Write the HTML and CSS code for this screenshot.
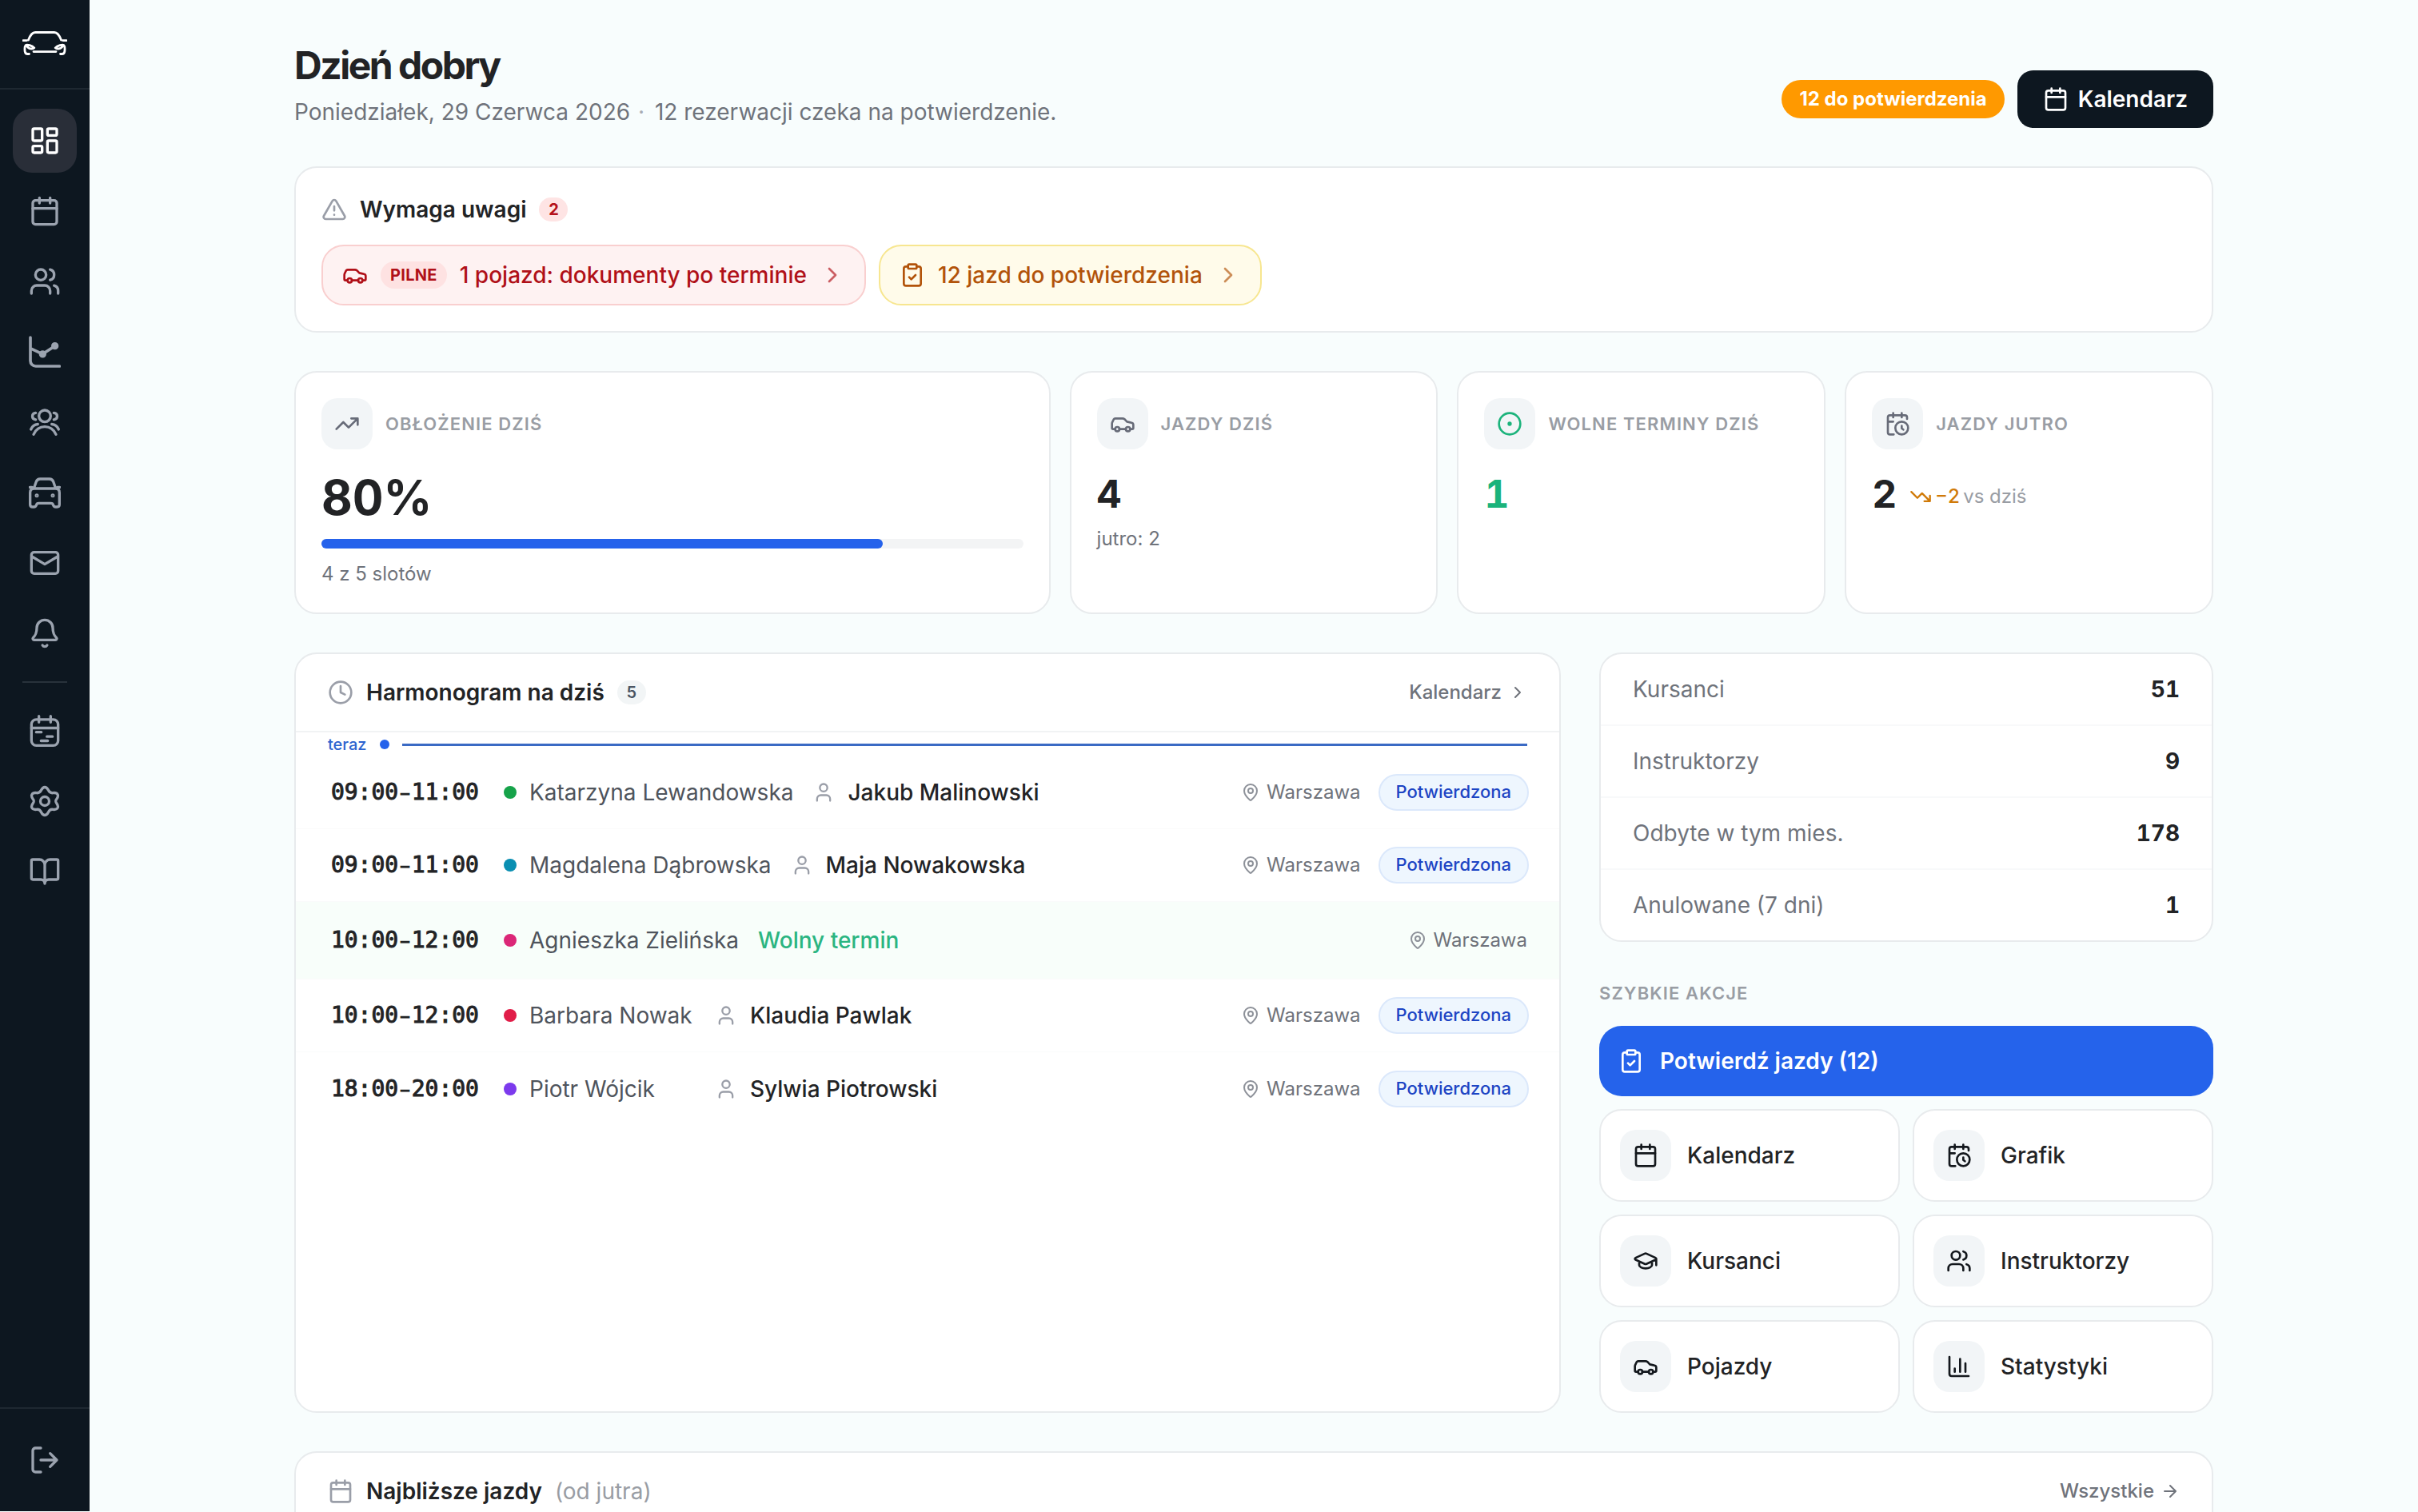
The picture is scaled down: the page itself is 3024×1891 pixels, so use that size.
FILE: index.html
```html
<!DOCTYPE html>
<html lang="pl">
<head>
  <meta charset="UTF-8">
  <meta name="viewport" content="width=device-width, initial-scale=1.0">
  <title>Panel</title>
  <link rel="stylesheet" href="styles.css">
</head>
<body>
  <!-- Ikony -->
  <svg class="sprite" xmlns="http://www.w3.org/2000/svg">
    <symbol id="logo" viewBox="0 0 56 32">
      <path d="M7.5 11C10 4.5 12.5 1.5 16 1.5h24c3.500 0 6 3 8.500 9.500M1 11.600h4.500M50.500 11.600H55M14 25.600h28M8.500 28.500H6.500c-2 0-3-1-3.300-3-.4-3-.5-6.500 1-8 1.500-1.200 8 .3 10.600 3.300-2 2-7.500 1.500-9-2M47.500 28.500h2c2 0 3-1 3.300-3 .4-3 .5-6.500-1-8-1.500-1.200-8 .3-10.600 3.300 2 2 7.500 1.500 9-2"/>
    </symbol>
    <symbol id="dashboard" viewBox="0 0 24 24">
      <rect x="3" y="3" width="7" height="9" rx="1"/><rect x="14" y="3" width="7" height="5" rx="1"/><rect x="14" y="12" width="7" height="9" rx="1"/><rect x="3" y="16" width="7" height="5" rx="1"/>
    </symbol>
    <symbol id="calendar" viewBox="0 0 24 24">
      <path d="M8 2v4M16 2v4M3 10h18"/><rect x="3" y="4" width="18" height="18" rx="2"/>
    </symbol>
    <symbol id="users" viewBox="0 0 24 24">
      <path d="M16 21v-2a4 4 0 0 0-4-4H6a4 4 0 0 0-4 4v2M22 21v-2a4 4 0 0 0-3-3.870M16 3.130a4 4 0 0 1 0 7.750"/><circle cx="9" cy="7" r="4"/>
    </symbol>
    <symbol id="line-chart" viewBox="0 0 24 24">
      <path d="M1.200 1.200v17.600a4 4 0 0 0 4 4H23M1.500 9.500l8.900 4.200 9.200-6.100" stroke-width="2.200"/><circle cx="10.400" cy="13.700" r="1.800" fill="currentColor"/><circle cx="19.600" cy="7.600" r="1.800" fill="currentColor"/>
    </symbol>
    <symbol id="group" viewBox="0 0 24 24">
      <circle cx="12" cy="7.400" r="4.400"/><path d="M3.600 21.200c1.700-3.800 4.700-5.800 8.400-5.800s6.700 2 8.400 5.800M5.200 5c-1.600.1-2.500 1.200-2.500 2.500s.9 2.400 2.500 2.600M18.800 5c1.600.1 2.500 1.200 2.500 2.500s-.9 2.400-2.500 2.600M1.600 17.400c1-2.400 2.700-3.700 5.200-3.900M22.400 17.400c-1-2.400-2.700-3.700-5.200-3.900"/>
    </symbol>
    <symbol id="car-front" viewBox="0 0 24 24">
      <path d="M3.800 9l1.700-5c.5-1.500 1.400-2.200 3-2.200h7c1.600 0 2.500.7 3 2.200l1.700 5M.8 8h1.700M21.500 8h1.700M4 9h16c2 0 3 1.200 3 3v9c0 1.200-.6 1.800-1.800 1.800h-1c-1 0-1.600-.5-1.900-1.500-.2-.9-.8-1.300-1.800-1.300h-9c-1 0-1.600.4-1.800 1.300-.3 1-.9 1.500-1.900 1.500h-1C1.600 22.800 1 22.200 1 21v-9c0-1.800 1-3 3-3z"/><circle cx="6" cy="14.300" r=".5" fill="currentColor"/><circle cx="18" cy="14.300" r=".5" fill="currentColor"/>
    </symbol>
    <symbol id="mail" viewBox="0 0 24 24">
      <rect x="2" y="4" width="20" height="16" rx="2"/><path d="M2.300 7.200l9.700 5.800 9.700-5.800"/>
    </symbol>
    <symbol id="bell" viewBox="0 0 24 24">
      <path d="M10.268 21a2 2 0 0 0 3.464 0M3.262 15.326A1 1 0 0 0 4 17h16a1 1 0 0 0 .74-1.673C19.410 13.956 18 12.499 18 8A6 6 0 0 0 6 8c0 4.499-1.411 5.956-2.738 7.326"/>
    </symbol>
    <symbol id="schedule" viewBox="0 0 24 24">
      <rect x="2" y="3.500" width="20" height="19.500" rx="3.600"/><path d="M2 9.900h20M7.600 1v4.600M16.400 1v4.600M5.600 13h3.800M13.600 16.300h4.200M9.200 19.500h5"/>
    </symbol>
    <symbol id="settings" viewBox="0 0 24 24">
      <path d="M12 1.500c1.500 0 2.100 1.100 2.700 2.300.8 1.600 1.700 2.200 3.400 2 1.400-.2 2.700-.2 3.500 1.100.7 1.300.1 2.400-.7 3.500-1 1.300-1 1.900 0 3.200.8 1.100 1.400 2.200.7 3.500-.8 1.300-2.100 1.300-3.500 1.100-1.700-.2-2.600.4-3.400 2-.6 1.200-1.200 2.300-2.700 2.300s-2.100-1.100-2.700-2.300c-.8-1.600-1.700-2.200-3.400-2-1.400.2-2.700.2-3.500-1.100-.7-1.300-.1-2.400.7-3.500 1-1.300 1-1.900 0-3.200-.8-1.100-1.400-2.200-.7-3.500.8-1.300 2.100-1.300 3.500-1.100 1.700.2 2.600-.4 3.400-2 .6-1.200 1.200-2.300 2.700-2.300z"/><circle cx="12" cy="12" r="3.300"/>
    </symbol>
    <symbol id="book" viewBox="0 0 24 24">
      <path d="M12 7v14M3 18a1 1 0 0 1-1-1V4a1 1 0 0 1 1-1h5a4 4 0 0 1 4 4 4 4 0 0 1 4-4h5a1 1 0 0 1 1 1v13a1 1 0 0 1-1 1h-6a3 3 0 0 0-3 3 3 3 0 0 0-3-3z"/>
    </symbol>
    <symbol id="logout" viewBox="0 0 24 24">
      <path d="M9 21H5a2 2 0 0 1-2-2V5a2 2 0 0 1 2-2h4M16 17l5-5-5-5M21 12H9"/>
    </symbol>
    <symbol id="alert" viewBox="0 0 24 24">
      <path d="M21.730 18l-8-14a2 2 0 0 0-3.480 0l-8 14A2 2 0 0 0 4 21h16a2 2 0 0 0 1.730-3M12 9v4M12 17h.01"/>
    </symbol>
    <symbol id="car" viewBox="0 0 24 24">
      <path d="M19 17h2c.6 0 1-.4 1-1v-3c0-.9-.7-1.700-1.500-1.900C18.700 10.600 16 10 16 10s-1.300-1.400-2.200-2.300c-.5-.4-1.100-.7-1.800-.7H5c-.6 0-1.100.4-1.400.9l-1.400 2.900A3.700 3.700 0 0 0 2 12v4c0 .6.4 1 1 1h2M9 17h6"/><circle cx="7" cy="17" r="2"/><circle cx="17" cy="17" r="2"/>
    </symbol>
    <symbol id="clipboard" viewBox="0 0 24 24">
      <rect x="8" y="2" width="8" height="4" rx="1"/><path d="M16 4h2a2 2 0 0 1 2 2v14a2 2 0 0 1-2 2H6a2 2 0 0 1-2-2V6a2 2 0 0 1 2-2h2M9 14l2 2 4-4"/>
    </symbol>
    <symbol id="chevron" viewBox="0 0 24 24"><path d="M9 18l6-6-6-6"/></symbol>
    <symbol id="trend-up" viewBox="0 0 24 24"><path d="M22 7l-8.500 8.500-5-5L2 17M16 7h6v6"/></symbol>
    <symbol id="trend-down" viewBox="0 0 24 24"><path d="M22 17l-8.500-8.500-5 5L2 7M16 17h6v-6"/></symbol>
    <symbol id="target" viewBox="0 0 24 24"><circle cx="12" cy="12" r="10"/><circle cx="12" cy="12" r="1"/></symbol>
    <symbol id="calendar-clock" viewBox="0 0 24 24">
      <path d="M21 7.500V6a2 2 0 0 0-2-2H5a2 2 0 0 0-2 2v14a2 2 0 0 0 2 2h3.500M16 2v4M8 2v4M3 10h5M17.500 17.500L16 16.300V14"/><circle cx="16" cy="16" r="6"/>
    </symbol>
    <symbol id="clock" viewBox="0 0 24 24"><circle cx="12" cy="12" r="10"/><path d="M12 6v6l4 2"/></symbol>
    <symbol id="user" viewBox="0 0 24 24"><path d="M19 21v-2a4 4 0 0 0-4-4H9a4 4 0 0 0-4 4v2"/><circle cx="12" cy="7" r="4"/></symbol>
    <symbol id="pin" viewBox="0 0 24 24">
      <path d="M20 10c0 4.993-5.539 10.193-7.399 11.799a1 1 0 0 1-1.202 0C9.539 20.193 4 14.993 4 10a8 8 0 0 1 16 0"/><circle cx="12" cy="10" r="3"/>
    </symbol>
    <symbol id="cap" viewBox="0 0 24 24">
      <path d="M21.420 10.922a1 1 0 0 0-.019-1.838L12.830 5.180a2 2 0 0 0-1.660 0L2.600 9.080a1 1 0 0 0 0 1.832l8.570 3.908a2 2 0 0 0 1.660 0zM22 10v6M6 12.500V16a6 3 0 0 0 12 0v-3.500"/>
    </symbol>
    <symbol id="bars" viewBox="0 0 24 24"><path d="M3 3v16a2 2 0 0 0 2 2h16M18 17V9M13 17V5M8 17v-3"/></symbol>
    <symbol id="arrow" viewBox="0 0 24 24"><path d="M5 12h14M12 5l7 7-7 7"/></symbol>
  </svg>

  <div class="layout">
    <aside class="sidebar">
      <div class="brand"><svg class="icon"><use href="#logo"/></svg></div>
      <nav class="menu">
        <a class="menu-item active"><svg class="icon"><use href="#dashboard"/></svg></a>
        <a class="menu-item"><svg class="icon"><use href="#calendar"/></svg></a>
        <a class="menu-item"><svg class="icon"><use href="#users"/></svg></a>
        <a class="menu-item"><svg class="icon"><use href="#line-chart"/></svg></a>
        <a class="menu-item"><svg class="icon"><use href="#group"/></svg></a>
        <a class="menu-item"><svg class="icon"><use href="#car-front"/></svg></a>
        <a class="menu-item"><svg class="icon"><use href="#mail"/></svg></a>
        <a class="menu-item"><svg class="icon"><use href="#bell"/></svg></a>
        <span class="menu-line"></span>
        <a class="menu-item"><svg class="icon"><use href="#schedule"/></svg></a>
        <a class="menu-item"><svg class="icon"><use href="#settings"/></svg></a>
        <a class="menu-item"><svg class="icon"><use href="#book"/></svg></a>
      </nav>
      <div class="logout"><a class="menu-item"><svg class="icon"><use href="#logout"/></svg></a></div>
    </aside>

    <main class="content">
      <header class="top">
        <div>
          <h1>Dzień dobry</h1>
          <p class="date">Poniedziałek, 29 Czerwca 2026 <span class="sep">·</span> 12 rezerwacji czeka na potwierdzenie.</p>
        </div>
        <div class="top-actions">
          <span class="pending">12 do potwierdzenia</span>
          <a class="btn-dark"><svg class="icon"><use href="#calendar"/></svg>Kalendarz</a>
        </div>
      </header>

      <section class="card attention">
        <h2><svg class="icon muted"><use href="#alert"/></svg>Wymaga uwagi<span class="count red">2</span></h2>
        <div class="alerts">
          <a class="alert alert-red"><svg class="icon"><use href="#car"/></svg><span class="urgent">PILNE</span><span class="alert-text">1 pojazd: dokumenty po terminie</span><svg class="icon faded"><use href="#chevron"/></svg></a>
          <a class="alert alert-yellow"><svg class="icon"><use href="#clipboard"/></svg><span class="alert-text">12 jazd do potwierdzenia</span><svg class="icon faded"><use href="#chevron"/></svg></a>
        </div>
      </section>

      <section class="stats">
        <div class="card stat wide">
          <div class="stat-head"><span class="tile-icon"><svg class="icon"><use href="#trend-up"/></svg></span>OBŁOŻENIE DZIŚ</div>
          <div class="stat-value">80%</div>
          <div class="progress"><div class="progress-bar" style="width: 80%"></div></div>
          <p class="stat-note">4 z 5 slotów</p>
        </div>
        <div class="card stat">
          <div class="stat-head"><span class="tile-icon"><svg class="icon"><use href="#car"/></svg></span>JAZDY DZIŚ</div>
          <div class="stat-value">4</div>
          <p class="stat-note">jutro: 2</p>
        </div>
        <div class="card stat">
          <div class="stat-head"><span class="tile-icon green"><svg class="icon"><use href="#target"/></svg></span>WOLNE TERMINY DZIŚ</div>
          <div class="stat-value green">1</div>
        </div>
        <div class="card stat">
          <div class="stat-head"><span class="tile-icon"><svg class="icon"><use href="#calendar-clock"/></svg></span>JAZDY JUTRO</div>
          <div class="stat-value">2<span class="trend"><svg class="icon"><use href="#trend-down"/></svg><b>−2</b><span>vs dziś</span></span></div>
        </div>
      </section>

      <section class="columns">
        <div class="card schedule">
          <div class="card-head">
            <h2><svg class="icon muted"><use href="#clock"/></svg>Harmonogram na dziś<span class="count">5</span></h2>
            <a class="link">Kalendarz<svg class="icon"><use href="#chevron"/></svg></a>
          </div>
          <div class="now"><span>teraz</span><i class="now-dot"></i><i class="now-line"></i></div>
          <div class="lesson">
            <span class="time">09:00<span class="dash">–</span>11:00</span>
            <span class="teacher"><i class="dot dot-green"></i>Katarzyna Lewandowska</span>
            <span class="student"><svg class="icon"><use href="#user"/></svg>Jakub Malinowski</span>
            <span class="place"><svg class="icon"><use href="#pin"/></svg>Warszawa</span>
            <span class="status">Potwierdzona</span>
          </div>
          <div class="lesson">
            <span class="time">09:00<span class="dash">–</span>11:00</span>
            <span class="teacher"><i class="dot dot-cyan"></i>Magdalena Dąbrowska</span>
            <span class="student"><svg class="icon"><use href="#user"/></svg>Maja Nowakowska</span>
            <span class="place"><svg class="icon"><use href="#pin"/></svg>Warszawa</span>
            <span class="status">Potwierdzona</span>
          </div>
          <div class="lesson free">
            <span class="time">10:00<span class="dash">–</span>12:00</span>
            <span class="teacher"><i class="dot dot-pink"></i>Agnieszka Zielińska</span>
            <span class="free-label">Wolny termin</span>
            <span class="place"><svg class="icon"><use href="#pin"/></svg>Warszawa</span>
          </div>
          <div class="lesson">
            <span class="time">10:00<span class="dash">–</span>12:00</span>
            <span class="teacher"><i class="dot dot-red"></i>Barbara Nowak</span>
            <span class="student"><svg class="icon"><use href="#user"/></svg>Klaudia Pawlak</span>
            <span class="place"><svg class="icon"><use href="#pin"/></svg>Warszawa</span>
            <span class="status">Potwierdzona</span>
          </div>
          <div class="lesson">
            <span class="time">18:00<span class="dash">–</span>20:00</span>
            <span class="teacher"><i class="dot dot-violet"></i>Piotr Wójcik</span>
            <span class="student"><svg class="icon"><use href="#user"/></svg>Sylwia Piotrowski</span>
            <span class="place"><svg class="icon"><use href="#pin"/></svg>Warszawa</span>
            <span class="status">Potwierdzona</span>
          </div>
        </div>

        <div class="side">
          <div class="card totals">
            <div class="total"><span>Kursanci</span><b>51</b></div>
            <div class="total"><span>Instruktorzy</span><b>9</b></div>
            <div class="total"><span>Odbyte w tym mies.</span><b>178</b></div>
            <div class="total"><span>Anulowane (7 dni)</span><b>1</b></div>
          </div>
          <h3>SZYBKIE AKCJE</h3>
          <a class="btn-blue"><svg class="icon"><use href="#clipboard"/></svg>Potwierdź jazdy (12)</a>
          <div class="shortcuts">
            <a class="card shortcut"><span class="tile-icon"><svg class="icon"><use href="#calendar"/></svg></span>Kalendarz</a>
            <a class="card shortcut"><span class="tile-icon"><svg class="icon"><use href="#calendar-clock"/></svg></span>Grafik</a>
            <a class="card shortcut"><span class="tile-icon"><svg class="icon"><use href="#cap"/></svg></span>Kursanci</a>
            <a class="card shortcut"><span class="tile-icon"><svg class="icon"><use href="#users"/></svg></span>Instruktorzy</a>
            <a class="card shortcut"><span class="tile-icon"><svg class="icon"><use href="#car"/></svg></span>Pojazdy</a>
            <a class="card shortcut"><span class="tile-icon"><svg class="icon"><use href="#bars"/></svg></span>Statystyki</a>
          </div>
        </div>
      </section>

      <section class="card upcoming">
        <div class="card-head">
          <h2><svg class="icon muted"><use href="#calendar"/></svg>Najbliższe jazdy<span class="hint">(od jutra)</span></h2>
          <a class="link">Wszystkie<svg class="icon"><use href="#arrow"/></svg></a>
        </div>
      </section>
    </main>
  </div>
</body>
</html>
```
FILE: styles.css
```css
* {
  box-sizing: border-box;
}
body {
  margin: 0;
  height: 1891px;
  overflow: hidden;
  font-family: Inter, "Liberation Sans", sans-serif;
  font-size: 28px;
  line-height: 40px;
  color: #222325;
  background-color: #f8fdfd;
}
h1, h2, h3, p {
  margin: 0;
}
.sprite {
  display: none;
}
.icon {
  width: 32px;
  height: 32px;
  flex-shrink: 0;
  fill: none;
  stroke: currentColor;
  stroke-width: 2;
  stroke-linecap: round;
  stroke-linejoin: round;
}
.muted {
  color: #9a9ea8;
}
.layout {
  display: flex;
}

/* menu boczne */
.sidebar {
  width: 112px;
  height: 1890px;
  display: flex;
  flex-direction: column;
  background-color: #0d1720;
  color: #9ba3af;
}
.brand {
  height: 112px;
  display: flex;
  align-items: center;
  justify-content: center;
  border-bottom: 2px solid #1e2831;
  color: #fff;
}
.brand .icon {
  width: 56px;
  height: 32px;
  stroke-width: 2.8;
}
.menu {
  flex: 1;
  display: flex;
  flex-direction: column;
  align-items: center;
  gap: 8px;
  padding-top: 24px;
}
.menu-item {
  width: 80px;
  height: 80px;
  display: flex;
  align-items: center;
  justify-content: center;
  border-radius: 24px;
}
.menu-item .icon {
  width: 40px;
  height: 40px;
}
.menu-item.active {
  background-color: #292e38;
  color: #fff;
}
.menu-line {
  width: 56px;
  height: 2px;
  margin: 12px 0;
  background-color: #28323b;
}
.logout {
  height: 130px;
  display: flex;
  align-items: center;
  justify-content: center;
  border-top: 2px solid #1e2831;
}

.content {
  width: 2400px;
  height: 1891px;
  margin: 0 auto;
  padding-top: 52px;
  overflow: hidden;
}
.top {
  height: 108px;
  display: flex;
  justify-content: space-between;
  align-items: flex-end;
}
h1 {
  font-size: 48px;
  line-height: 60px;
  font-weight: 700;
  letter-spacing: -2.5px;
}
.date {
  margin-top: 8px;
  color: #6f737b;
}
.sep {
  margin: 0 5px 0 2px;
  color: #a8acb3;
}
.top-actions {
  display: flex;
  align-items: center;
  gap: 16px;
}
.pending {
  height: 48px;
  padding: 0 22px;
  border-radius: 24px;
  background-color: #ff9900;
  color: #fff;
  font-size: 24px;
  line-height: 48px;
  font-weight: 700;
}
.btn-dark {
  height: 72px;
  padding: 0 32px;
  display: flex;
  align-items: center;
  gap: 12px;
  border-radius: 20px;
  background-color: #0d1720;
  color: #fff;
  font-weight: 600;
}

.card {
  background-color: #fff;
  border: 2px solid #e8ebed;
  border-radius: 28px;
}
h2 {
  display: flex;
  align-items: center;
  gap: 16px;
  font-size: 28px;
  line-height: 40px;
  font-weight: 600;
}
.count {
  min-width: 36px;
  height: 30px;
  padding: 0 11px;
  border-radius: 15px;
  text-align: center;
  font-size: 20px;
  line-height: 30px;
  background-color: #f2f5f6;
  color: #4b5563;
}
.count.red {
  background-color: #fee4e4;
  color: #b5121b;
  font-weight: 700;
}

/* alerty */
.attention {
  height: 208px;
  margin-top: 48px;
  padding: 32px;
}
.alerts {
  display: flex;
  gap: 16px;
  margin-top: 24px;
}
.alert {
  height: 76px;
  padding: 0 24px;
  display: flex;
  align-items: center;
  gap: 16px;
  border: 2px solid;
  border-radius: 28px;
  font-weight: 500;
}
.alert-red {
  background-color: #fef2f2;
  border-color: #f9cfcf;
  color: #b01018;
}
.alert-yellow {
  background-color: #fffbea;
  border-color: #f7e690;
  color: #b2530a;
}
.urgent {
  height: 34px;
  padding: 0 12px;
  border-radius: 17px;
  background-color: #fee2e2;
  font-size: 20px;
  line-height: 34px;
  font-weight: 700;
  letter-spacing: 0.3px;
}
.faded {
  opacity: 0.65;
}

/* kafelki ze statystykami */
.stats {
  display: grid;
  grid-template-columns: repeat(5, 1fr);
  gap: 24px;
  margin-top: 48px;
}
.stat {
  height: 304px;
  padding: 32px;
}
.wide {
  grid-column: span 2;
}
.stat-head {
  display: flex;
  align-items: center;
  gap: 16px;
  font-size: 22px;
  font-weight: 600;
  letter-spacing: 1.1px;
  color: #999da4;
}
.tile-icon {
  width: 64px;
  height: 64px;
  display: flex;
  align-items: center;
  justify-content: center;
  border-radius: 20px;
  background-color: #f2f5f7;
  color: #676b78;
}
.green {
  color: #1bb37b;
}
.stat-value {
  height: 48px;
  margin-top: 32px;
  display: flex;
  align-items: center;
  font-size: 48px;
  font-weight: 700;
  font-variant-numeric: tabular-nums;
}
.wide .stat-value {
  height: 60px;
  margin-top: 30px;
  font-size: 60px;
}
.progress {
  height: 12px;
  margin-top: 22px;
  border-radius: 6px;
  background-color: #f3f4f5;
}
.progress-bar {
  height: 12px;
  border-radius: 6px;
  background-color: #2562eb;
}
.stat-note {
  margin-top: 16px;
  font-size: 24px;
  line-height: 32px;
  color: #6f737b;
}
.trend {
  display: flex;
  align-items: center;
  margin: 6px 0 0 16px;
  font-size: 24px;
  line-height: 32px;
  font-weight: 400;
  color: #999da4;
}
.trend .icon {
  width: 28px;
  height: 28px;
  margin-right: 4px;
  color: #d07a08;
}
.trend b {
  margin-right: 4px;
  font-weight: 500;
  color: #d07a08;
}

.columns {
  display: grid;
  grid-template-columns: 1584px 768px;
  gap: 48px;
  margin-top: 48px;
}
.card-head {
  height: 98px;
  padding: 0 40px;
  display: flex;
  justify-content: space-between;
  align-items: center;
  border-bottom: 2px solid #f1f3f4;
}
.link {
  display: flex;
  align-items: center;
  gap: 8px;
  font-size: 24px;
  font-weight: 500;
  color: #6f737b;
}
.link .icon {
  width: 24px;
  height: 24px;
}

/* harmonogram */
.now {
  height: 30px;
  padding: 0 40px;
  display: flex;
  align-items: center;
  gap: 16px;
  font-size: 20px;
  font-weight: 500;
  color: #2d64cf;
}
.now-dot {
  width: 12px;
  height: 12px;
  border-radius: 50%;
  background-color: #2562eb;
}
.now-line {
  flex: 1;
  height: 3px;
  background-color: #3a6ac4;
}
.lesson {
  height: 91px;
  padding: 0 40px;
  display: flex;
  align-items: center;
  border-bottom: 1px solid #fafbfb;
}
.lesson.free {
  height: 97px;
  background-color: #f8fefa;
}
.lesson:last-child {
  border-bottom: 0;
}
.time {
  width: 220px;
  padding-left: 4px;
  font-family: "DejaVu Sans Mono", monospace;
  font-size: 28px;
  letter-spacing: -0.06px;
  -webkit-text-stroke: 1px currentColor;
}
.dash {
  display: inline-block;
  width: 16.8px;
  text-align: center;
  font-family: Inter, sans-serif;
  font-size: 21px;
  line-height: 28px;
  -webkit-text-stroke: 1.2px currentColor;
}
.teacher {
  min-width: 240px;
  margin-right: 24px;
  display: flex;
  align-items: center;
  gap: 16px;
  color: #4f545c;
}
.dot {
  width: 16px;
  height: 16px;
  border-radius: 50%;
}
.dot-green { background-color: #16a34a; }
.dot-cyan { background-color: #0a8fb2; }
.dot-pink { background-color: #db2777; }
.dot-red { background-color: #e11d48; }
.dot-violet { background-color: #7c3aed; }
.student {
  display: flex;
  align-items: center;
  gap: 16px;
  font-weight: 500;
}
.student .icon {
  width: 28px;
  height: 28px;
  color: #9a9ea8;
}
.free-label {
  font-weight: 500;
  color: #2bb581;
}
.place {
  display: flex;
  align-items: center;
  gap: 8px;
  margin-left: auto;
  font-size: 24px;
  color: #6f737b;
}
.place .icon {
  width: 24px;
  height: 24px;
  color: #8d9199;
}
.status {
  height: 46px;
  margin: 0 -2px 0 22px;
  padding: 0 20px;
  border: 2px solid #dbe8fb;
  border-radius: 23px;
  background-color: #eef6fe;
  font-size: 22px;
  line-height: 41px;
  font-weight: 500;
  color: #1d45c4;
}

/* prawa kolumna */
.total {
  height: 90px;
  padding: 0 40px;
  display: flex;
  justify-content: space-between;
  align-items: center;
  border-bottom: 2px solid #f8f9fa;
  color: #6f737b;
}
.total:last-child {
  height: 88px;
  border-bottom: 0;
}
.total b {
  font-weight: 700;
  font-variant-numeric: tabular-nums;
  color: #222325;
}
h3 {
  margin: 48px 0 25px;
  font-size: 22px;
  line-height: 32px;
  font-weight: 600;
  letter-spacing: 1.1px;
  color: #999da4;
}
.btn-blue {
  height: 88px;
  padding: 0 24px;
  display: flex;
  align-items: center;
  gap: 20px;
  border-radius: 28px;
  background-color: #2563eb;
  color: #fff;
  font-weight: 600;
}
.shortcuts {
  display: grid;
  grid-template-columns: 1fr 1fr;
  gap: 16px;
  margin-top: 16px;
}
.shortcut {
  height: 116px;
  padding: 0 24px;
  display: flex;
  align-items: center;
  gap: 20px;
  font-weight: 500;
}
.shortcut .tile-icon {
  color: #14181d;
}

.upcoming {
  height: 300px;
  margin-top: 48px;
}
.hint {
  font-weight: 400;
  color: #999da4;
}
```
